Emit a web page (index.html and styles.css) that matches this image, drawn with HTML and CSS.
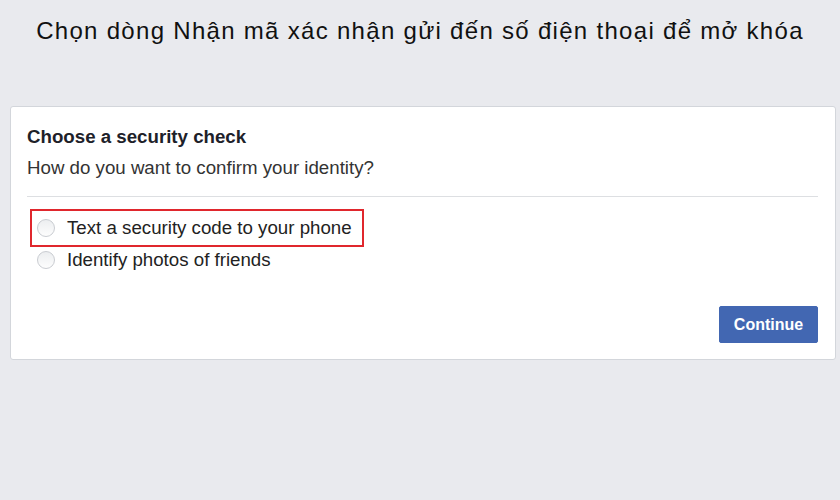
FILE: index.html
```html
<!DOCTYPE html>
<html lang="vi">
<head>
    <meta charset="UTF-8">
    <meta name="viewport" content="width=device-width, initial-scale=1.0">
    <title>Choose a security check</title>
    <link rel="stylesheet" href="styles.css">
</head>
<body>
    <h1 class="caption">Chọn dòng Nhận mã xác nhận gửi đến số điện thoại để mở khóa</h1>

    <div class="card">
        <div class="card-header">
            <h2>Choose a security check</h2>
            <p>How do you want to confirm your identity?</p>
        </div>
        <div class="card-body">
            <label class="option highlight">
                <span class="radio"></span>
                <span>Text a security code to your phone</span>
            </label>
            <label class="option">
                <span class="radio"></span>
                <span>Identify photos of friends</span>
            </label>
        </div>
        <div class="card-footer">
            <button class="continue-button">Continue</button>
        </div>
    </div>
</body>
</html>
```

FILE: styles.css
```css
body, html {
    margin: 0;
    height: 100%;
    background-color: #e9eaee;
    font-family: "Liberation Sans", Arial, sans-serif;
    color: #1d2129;
}
.caption {
    margin: 0;
    padding-top: 17px;
    text-align: center;
    font-size: 24px;
    line-height: 27px;
    font-weight: normal;
    color: #111;
    letter-spacing: 1.3px;
}
.card {
    margin: 62px 4px 0 10px;
    background-color: #fff;
    border: 1px solid #d3d6db;
    border-radius: 3px;
    padding: 0 17px 16px 16px;
}
.card-header {
    padding: 18px 0 16px;
    border-bottom: 1px solid #dddfe2;
}
.card-header h2 {
    margin: 0;
    font-size: 18.7px;
    line-height: 24px;
    font-weight: bold;
}
.card-header p {
    margin: 7px 0 0;
    font-size: 18.7px;
    line-height: 24px;
    color: #333;
}
.card-body {
    padding: 12px 0 0 3px;
}
.option {
    display: flex;
    align-items: center;
    gap: 12px;
    font-size: 18.7px;
    line-height: 24px;
    color: #222;
    width: max-content;
    padding: 5px 10px 5px 5px;
    border: 2px solid transparent;
}
.option.highlight {
    border-color: #e0272d;
    margin-bottom: -6px;
}
.radio {
    width: 18px;
    height: 18px;
    border-radius: 50%;
    border: 1px solid #c9ccd1;
    background: linear-gradient(#eceef0, #fdfdfd);
    box-sizing: border-box;
}
.card-footer {
    display: flex;
    justify-content: flex-end;
    padding-top: 27px;
}
.continue-button {
    width: 99px;
    height: 37px;
    background-color: #4267b2;
    border: 1px solid #4267b2;
    border-radius: 2px;
    color: #fff;
    font-family: "Liberation Sans", Arial, sans-serif;
    font-size: 16px;
    font-weight: bold;
    cursor: pointer;
}
```
